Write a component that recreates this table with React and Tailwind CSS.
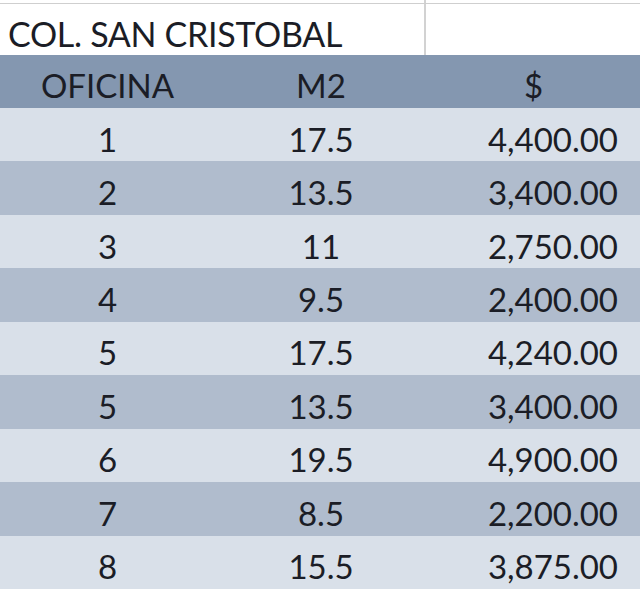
export default function App() {
  const rows = [
    ["1", "17.5", "4,400.00"],
    ["2", "13.5", "3,400.00"],
    ["3", "11", "2,750.00"],
    ["4", "9.5", "2,400.00"],
    ["5", "17.5", "4,240.00"],
    ["5", "13.5", "3,400.00"],
    ["6", "19.5", "4,900.00"],
    ["7", "8.5", "2,200.00"],
    ["8", "15.5", "3,875.00"],
  ];
  return (
    <div className="w-[640px] h-[589px] overflow-hidden bg-white text-[#1b1d26]" style={{ fontFamily: "Lato, 'Open Sans', sans-serif" }}>
      <div className="flex h-[4px] border-b border-[#cfcfcf]">
        <div className="w-[426px] border-r-2 border-[#d2d2d2]" />
        <div className="flex-1" />
      </div>
      <div className="flex h-[51px]">
        <div className="w-[426px] border-r-2 border-[#d2d2d2] flex items-center pl-[8px] pt-[9px] text-[34px] leading-none tracking-[-0.3px]">
          COL. SAN CRISTOBAL
        </div>
        <div className="flex-1" />
      </div>
      <div className="grid grid-cols-[215px_212px_213px] h-[53px] bg-[#8497b0] items-center pt-[8px] text-[33px] leading-none">
        <div className="text-center">OFICINA</div>
        <div className="text-center">M2</div>
        <div className="text-center">$</div>
      </div>
      {rows.map((r, i) => (
        <div
          key={i}
          className={`grid grid-cols-[215px_212px_213px] h-[53.44px] items-center pt-[9px] text-[33px] leading-none ${i % 2 === 0 ? "bg-[#d9e0e9]" : "bg-[#b0bccd]"}`}
        >
          <div className="text-center">{r[0]}</div>
          <div className="text-center">{r[1]}</div>
          <div className="text-right pr-[22px]">{r[2]}</div>
        </div>
      ))}
    </div>
  );
}
